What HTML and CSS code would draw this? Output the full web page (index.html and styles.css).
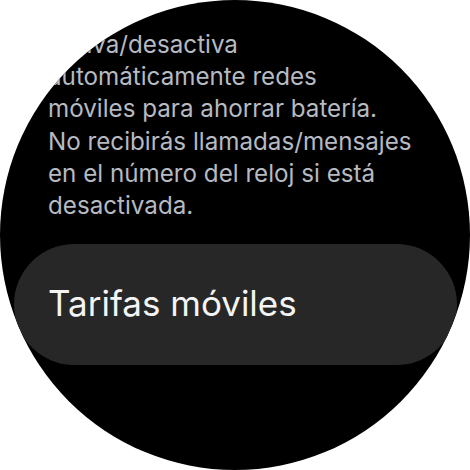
FILE: index.html
```html
<!DOCTYPE html>
<html lang="es">
<head>
<meta charset="utf-8">
<link rel="stylesheet" href="styles.css">
</head>
<body>
<div class="watch">
  <div class="content">
    <p class="desc">Activa/desactiva<br>automáticamente redes<br>móviles para ahorrar batería.<br>No recibirás llamadas/mensajes<br>en el número del reloj si está<br>desactivada.</p>
    <div class="chip"><span class="chip-label">Tarifas móviles</span></div>
  </div>
</div>
</body>
</html>
```
FILE: styles.css
```css
html, body {
  margin: 0;
  padding: 0;
  background: #ffffff;
}
.watch {
  width: 470px;
  height: 470px;
  border-radius: 50%;
  background: #000000;
  overflow: hidden;
}
.content {
  padding: 29px 13px 0 14px;
  display: flex;
  flex-direction: column;
}
.desc {
  margin: 0 0 0 34px;
  font-family: Inter, "Noto Sans", sans-serif;
  font-size: 24.2px;
  line-height: 32.2px;
  color: #b6bac1;
  white-space: nowrap;
}
.chip {
  margin-top: 22px;
  height: 121px;
  border-radius: 61px;
  background: #272727;
  display: flex;
  align-items: center;
  padding-left: 34px;
}
.chip-label {
  font-family: Inter, "Noto Sans", sans-serif;
  font-size: 35px;
  color: #f4f4f4;
  margin-top: -3px;
}
```
